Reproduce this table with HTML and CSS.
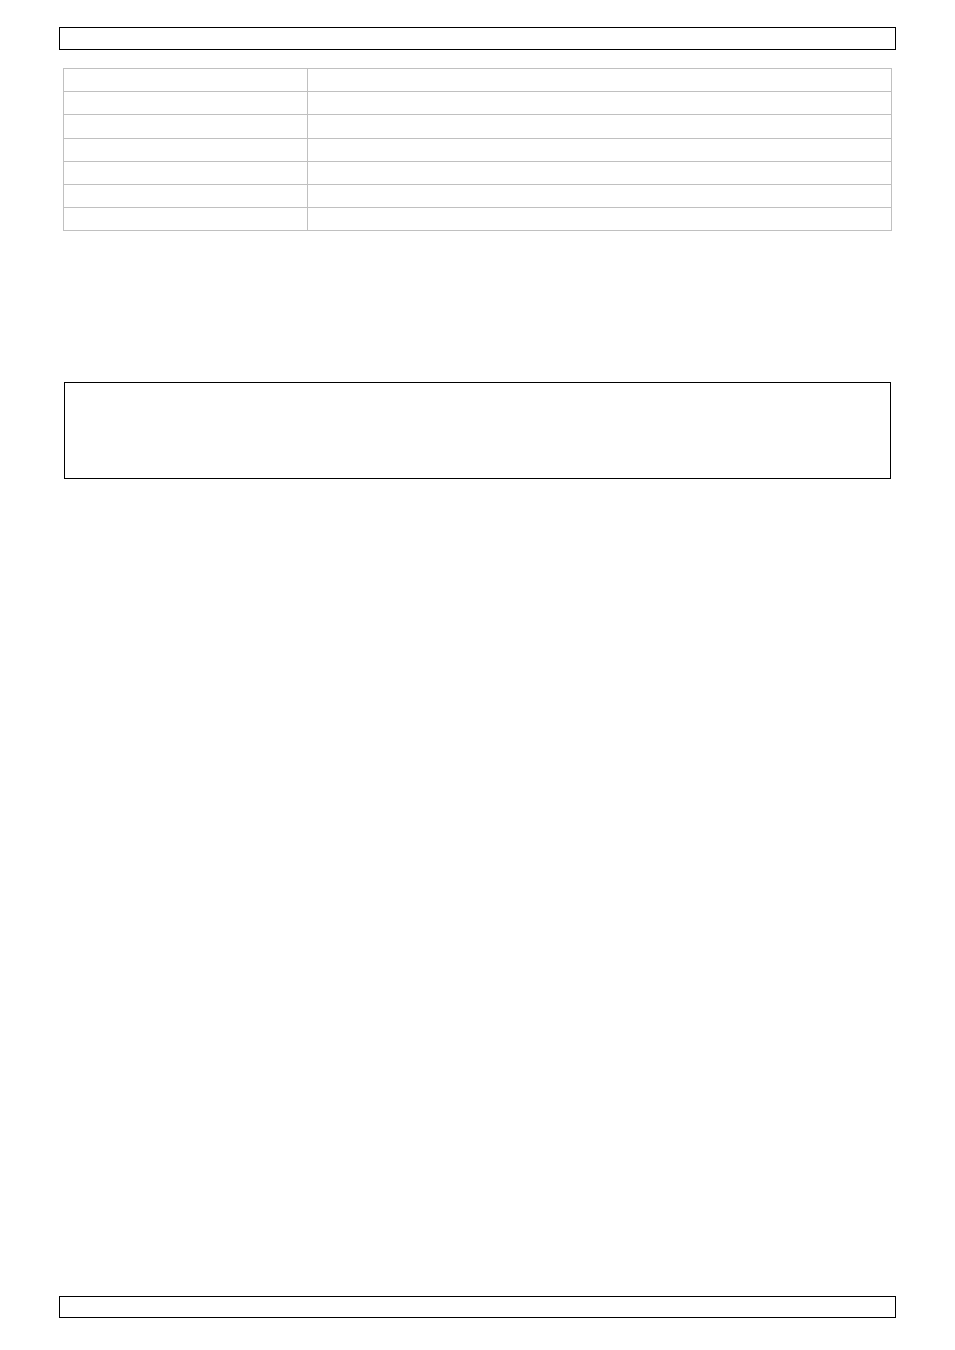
FILE: index.html
```html
<!DOCTYPE html>
<html lang="en">
<head>
    <meta charset="UTF-8">
    <meta name="viewport" content="width=device-width, initial-scale=1.0">
    <title>Page</title>
    <link rel="stylesheet" href="styles.css">
</head>
<body>
    <div class="page">
        <div class="page-header"></div>

        <table class="spec-table">
            <tr><td class="spec-label"></td><td></td></tr>
            <tr><td class="spec-label"></td><td></td></tr>
            <tr class="tall"><td class="spec-label"></td><td></td></tr>
            <tr><td class="spec-label"></td><td></td></tr>
            <tr><td class="spec-label"></td><td></td></tr>
            <tr><td class="spec-label"></td><td></td></tr>
            <tr><td class="spec-label"></td><td></td></tr>
        </table>

        <div class="notice-box"></div>

        <div class="page-footer"></div>
    </div>
</body>
</html>
```

FILE: styles.css
```css
body {
    margin: 0;
    padding: 0;
    font-family: "Liberation Sans", Arial, sans-serif;
    background: #ffffff;
}

.page {
    display: flex;
    flex-direction: column;
    min-height: 1350px;
    box-sizing: border-box;
    padding: 27px 0 32px 59px;
    width: 896px;
}

.page-header {
    width: 837px;
    height: 23px;
    box-sizing: border-box;
    border: 1px solid #000000;
}

.spec-table {
    margin: 18px 0 0 4px;
    width: 829px;
    border-collapse: collapse;
    table-layout: fixed;
}

.spec-table td {
    height: 22px;
    padding: 0;
    border: 1px solid #c0c0c0;
}

.spec-table tr.tall td {
    height: 23px;
}

.spec-table .spec-label {
    width: 243px;
}

.notice-box {
    margin: 151px 0 0 5px;
    width: 827px;
    height: 97px;
    box-sizing: border-box;
    border: 1px solid #000000;
}

.page-footer {
    margin-top: auto;
    width: 837px;
    height: 22px;
    box-sizing: border-box;
    border: 1px solid #000000;
}
```
